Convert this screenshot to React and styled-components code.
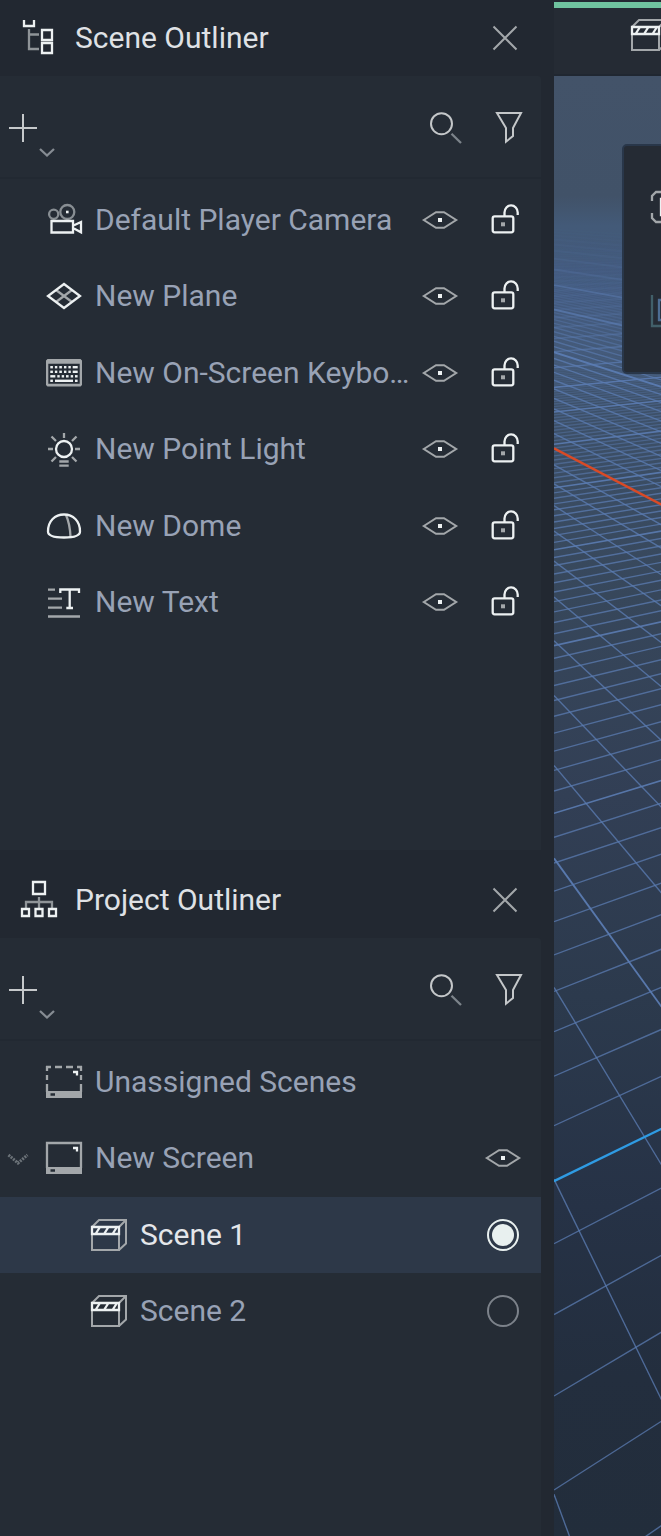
import React, { useState } from 'react';
import styled, { createGlobalStyle } from 'styled-components';

const GlobalStyle = createGlobalStyle`
  *, *::before, *::after { box-sizing: border-box; }
  body {
    margin: 0;
    background: #222831;
    color: #98a2b5;
    font: 400 30px/36px Roboto, "Liberation Sans", sans-serif;
  }
`;

const WHITE = '#edf1f2';
const GRAY = '#a3a7aa';

const Shell = styled.div`
  display: grid;
  grid-template-columns: minmax(0, 554px) minmax(107px, 1fr);
  min-height: 100vh;
`;

const Sidebar = styled.aside`
  display: flex;
  flex-direction: column;
  gap: 12px;
  padding-right: 13px;
  background: #222831;
`;

const Panel = styled.section`
  display: flex;
  flex-direction: column;
  flex: ${(p) => p.$share} 0 0;
`;

const PanelHeader = styled.header`
  display: flex;
  align-items: center;
  height: 76px;
  padding: 0 24px 0 20px;
`;

const PanelTitle = styled.h2`
  flex: 1;
  margin: 0 0 0 19px;
  font: inherit;
  color: #dfe1e5;
`;

const PanelBody = styled.div`
  flex: 1;
  background: #252c35;
  border-radius: 0 3px 0 0;
`;

const Toolbar = styled.div`
  display: flex;
  align-items: flex-start;
  gap: 33px;
  height: 103px;
  padding: 36px 18px 0 9px;
  border-bottom: 2px solid #222932;
`;

const Spacer = styled.span`
  flex: 1;
`;

const IconButton = styled.button`
  display: block;
  flex: none;
  padding: 0;
  border: 0;
  background: none;
  color: inherit;
  cursor: pointer;
`;

const Svg = styled.svg`
  display: block;
  flex: none;
  overflow: visible;
`;

const List = styled.ul`
  margin: 0;
  padding: 3px 0 0;
  list-style: none;
`;

const Row = styled.li`
  display: flex;
  align-items: flex-start;
  height: 76px;
  padding: 20px ${(p) => p.$end}px 0 ${(p) => (p.$nested ? 91 : 8)}px;
  color: ${(p) => (p.$selected ? '#e4e6ea' : 'inherit')};
  background: ${(p) => (p.$selected ? '#2d3848' : 'none')};

  &:nth-child(even) {
    height: 77px;
  }
`;

const ToggleSlot = styled.span`
  flex: none;
  width: 20px;
  height: 36px;
  margin-right: 18px;
`;

const RowLabel = styled.label`
  flex: 1;
  min-width: 0;
  margin-left: 13px;
  overflow: hidden;
  white-space: nowrap;
`;

const RowActions = styled.span`
  display: flex;
  gap: 29px;
`;

const Radio = styled.input`
  appearance: none;
  width: 32px;
  height: 32px;
  margin: 2px;
  padding: 3px;
  border: 2px solid #7c828a;
  border-radius: 50%;
  background-clip: content-box;

  &:checked {
    border-color: #e8f0ef;
    background-color: #e8f0ef;
  }
`;

const Main = styled.main`
  display: flex;
  flex-direction: column;
  min-width: 0;
  padding-top: 2px;
  overflow: hidden;
`;

const TopBar = styled.div`
  height: 74px;
  padding: 9px 0 0 77px;
  border-top: 6px solid #6fc39f;
  border-bottom: 2px solid #202731;
  background: #252b34;
`;

const Viewport = styled.div`
  position: relative;
  display: flex;
  flex: 1;
  overflow: hidden;
  background: linear-gradient(
    #435369 0px,
    #415268 120px,
    #435a78 150px,
    #42587a 220px,
    #40546f 270px,
    #3d5068 340px,
    #37475b 520px,
    #323f55 720px,
    #2c3a4d 920px,
    #263246 1130px,
    #232e3e 1300px,
    #222d3b 1460px
  );
`;

const GridSvg = styled.svg`
  display: block;
  width: 100%;
`;

const FloatingTools = styled.div`
  position: absolute;
  top: 68px;
  left: 68px;
  display: flex;
  flex-direction: column;
  gap: 72px;
  width: 116px;
  height: 230px;
  padding: 45px 0 0 27px;
  border: 2px solid #29374a;
  border-radius: 5px;
  background: #252b34;
`;

function Icon({ width = 36, height = 36, children }) {
  return (
    <Svg width={width} height={height} viewBox={`0 0 ${width} ${height}`} fill="none" stroke={GRAY} strokeWidth="2.3" aria-hidden="true">
      {children}
    </Svg>
  );
}

const SceneTreeIcon = () => (
  <Icon>
    <path d="M9 9V29H19M9 14.5H19" stroke="#8f9498" />
    <path d="M4 0V6H14V0" stroke={WHITE} />
    <path d="M22 10H32V20H22ZM22 23H32V33H22Z" stroke={WHITE} />
  </Icon>
);

const ProjectTreeIcon = () => (
  <Icon>
    <path d="M19 15V26M6 26V20H32V26" stroke="#8f9498" />
    <path d="M13 0H25V12H13ZM2 27H9V34H2ZM15.5 27H22.5V34H15.5ZM29 27H36V34H29Z" stroke={WHITE} />
  </Icon>
);

const CloseIcon = () => (
  <Icon width={24} height={24}>
    <path d="M.5 .5L23.5 23.5M23.5 .5L.5 23.5" strokeWidth="2" />
  </Icon>
);

const AddIcon = () => (
  <Icon width={46} height={44}>
    <path d="M0 16H28M14 2V30" stroke="#c6c9cb" strokeWidth="2" />
    <path d="M31 37L38 43.5L45 37" stroke="#868c93" />
  </Icon>
);

const SearchIcon = () => (
  <Icon width={32} height={32}>
    <circle cx="11.5" cy="11.7" r="10.5" stroke="#c4c7c9" strokeWidth="2" />
    <path d="M21.5 21.7L31 31" stroke="#7d848b" />
  </Icon>
);

const FilterIcon = () => (
  <Icon width={28} height={32}>
    <path d="M2 1H26L18 16V24L11 29.7V16Z" stroke="#c4c7c9" strokeWidth="2" />
  </Icon>
);

const CameraIcon = () => (
  <Icon>
    <circle cx="7.7" cy="12.3" r="4.6" stroke="#888e93" />
    <circle cx="21.3" cy="10" r="7" stroke="#888e93" />
    <rect x="20" y="8.7" width="2.6" height="2.6" fill={WHITE} stroke="none" />
    <path d="M5.5 19H27V30.5H5.5ZM28 23.2L35 20V30.3L28 26.6" stroke={WHITE} />
  </Icon>
);

const PlaneIcon = () => (
  <Icon>
    <path d="M10 12L26 24M26 12L10 24" />
    <path d="M18 6L34 18L18 30L2 18Z" stroke={WHITE} />
  </Icon>
);

const KEY_ROWS = [
  [11, [[4.3, 2.6], [8.9, 2.4], [13.3, 2.6], [18, 2.4], [22.4, 2.4], [26.7, 5]]],
  [15.6, [[4.3, 2.6], [8.9, 2.4], [13.3, 2.6], [18, 2.4], [22.4, 2.4], [26.7, 5]]],
  [20.1, [[4.3, 5], [11.3, 2.4], [15.7, 2.4], [20, 2.6], [24.7, 2.4], [29, 2.6]]],
  [24.6, [[4.3, 2.6], [9, 18], [29, 2.6]]],
];

const KeyboardIcon = () => (
  <Icon>
    <path d="M1.5 4H34.5L36 5.5V30L34.5 31.5H1.5L0 30V5.5ZM2.3 8.7V28.7H33.7V8.7Z" fill={GRAY} fillRule="evenodd" stroke="none" />
    {KEY_ROWS.map(([y, keys]) =>
      keys.map(([x, w]) => <rect key={`${x}-${y}`} x={x} y={y} width={w} height="2.4" fill={WHITE} stroke="none" />)
    )}
  </Icon>
);

const LightIcon = () => (
  <Icon>
    <path d="M18 2V7M2 18H7M29 18H34M5.5 5.5L10 10M30.5 5.5L26 10M10 26L5.5 30.5M26 26L30.5 30.5M13.3 30.5H22.7M13.3 34.7H22.7" />
    <circle cx="18" cy="18" r="8" stroke={WHITE} />
  </Icon>
);

const DomeIcon = () => (
  <Icon>
    <path d="M20 7Q24 16 24.5 29" />
    <path d="M2 23.5C2 13 9 6.5 18 6.5S34 13 34 23.5C34 28 26 29.5 18 29.5S2 28 2 23.5Z" stroke={WHITE} />
  </Icon>
);

const TextIcon = () => (
  <Icon>
    <path d="M2 5.7H9M2 14.7H16M2 23.7H16M2 32.5H34" />
    <path d="M14.3 9V5.5H33V9M23.7 5.5V24M20.3 24H27" stroke={WHITE} />
  </Icon>
);

const EyeIcon = () => (
  <Icon>
    <path d="M1.8 18L14 10.2H22L34.2 18L22 25.8H14Z" strokeWidth="2" />
    <rect x="16" y="16" width="4" height="4" fill={WHITE} stroke="none" />
  </Icon>
);

const UnlockIcon = () => (
  <Icon>
    <rect x="5.7" y="14.3" width="20.6" height="16" rx="2" stroke={WHITE} />
    <path d="M17.5 14V10.5A6.5 7 0 0 1 30.7 10.5V13" stroke={WHITE} />
    <rect x="14" y="20.3" width="4" height="4" fill={GRAY} stroke="none" />
  </Icon>
);

const ScreenIcon = ({ dashed }) => (
  <Icon>
    {dashed ? (
      <path d="M0 3H5M9 3H16M20 3H27M31 3H36M1 2V7M1 11V16M1 20V28M35 2V7M35 11V16M35 20V28" />
    ) : (
      <path d="M1 28V3H35V28" />
    )}
    <path d="M0 27H36V34H0ZM4.5 29.3V31.7H9V29.3Z" fill={GRAY} fillRule="evenodd" stroke="none" />
    <path d="M27 8H31V11.5" stroke={WHITE} />
  </Icon>
);

const ClapperIcon = () => (
  <Icon>
    <path d="M1 18V33H28V18M1 10L8 3H35V26.5L28 33M28 10L35 3" strokeWidth="2" />
    <path d="M1 10H28V17H1ZM4.5 17L9 10M13 17L17.5 10M21.5 17L26 10" stroke={WHITE} />
  </Icon>
);

const ExpandIcon = () => (
  <Icon width={20}>
    <path d="M.5 15L10 23L19.5 15" stroke="#6c7379" strokeWidth="3" strokeDasharray="2 1" />
  </Icon>
);

const FrameIcon = () => (
  <Icon width={32} height={32}>
    <path d="M1 10V5L5 1H10M22 1H27L31 5V10M1 22V27L5 31H10M22 31H27L31 27V22" />
    <path d="M10 8H22V24H10Z" stroke={WHITE} />
  </Icon>
);

const LayersIcon = () => (
  <Icon width={32} height={32}>
    <path d="M1 0V31H32" stroke="#415f69" />
    <path d="M8 5H30V25H8Z" stroke="#4d6d93" />
  </Icon>
);

// Ground grid in perspective: both line families meet on one horizon.
const HORIZON = 121.5;
const REACH = 2000;

// Dims lines as they crowd together, so the far ground blends into haze.
function haze(depth, step, major) {
  const spacing = depth * depth * step * (major ? 10 : 1);
  return Math.min(1, spacing / (major ? 20 : 6)) * Math.min(1, depth / 150);
}

function gridLines() {
  const lines = [];
  for (let n = -300; n <= 6; n += 1) {
    const major = n % 10 === 0;
    const depth = 1 / (0.0010166 - 0.00006073 * n);
    lines.push({
      id: `a${n}`,
      y1: HORIZON + depth,
      y2: HORIZON + depth * (1 - (0.053 * REACH) / 107),
      color: n === 0 ? '#2f9be3' : '#5b7cb2',
      width: n === 0 ? 2.4 : major ? 1.6 : 1.4,
      opacity: n === 0 ? 1 : (major ? 0.9 : 0.75) * haze(depth, 0.00006073, major),
    });
  }
  for (let m = -110; m <= 14; m += 1) {
    const major = m % 10 === 0;
    const depth = 1 / (0.0039872 - 0.00024739 * m);
    lines.push({
      id: `b${m}`,
      y1: HORIZON + depth,
      y2: HORIZON + depth * (1 + (0.2235 * REACH) / 107),
      color: m === 0 ? '#d94a26' : '#5b7cb2',
      width: m === 0 ? 2.4 : major ? 1.9 : 1.4,
      opacity: m === 0 ? 1 : (major ? 0.95 : 0.78) * haze(depth, 0.00024739, major),
    });
  }
  return lines.sort((a, b) => (a.width > 2) - (b.width > 2));
}

const GRID = gridLines();

const Ground = () => (
  <GridSvg aria-hidden="true">
    {GRID.map((l) => (
      <line key={l.id} x1="0" y1={l.y1} x2={REACH} y2={l.y2} stroke={l.color} strokeWidth={l.width} opacity={l.opacity} />
    ))}
  </GridSvg>
);

const OBJECTS = [
  ['Default Player Camera', CameraIcon],
  ['New Plane', PlaneIcon],
  ['New On-Screen Keybo…', KeyboardIcon],
  ['New Point Light', LightIcon],
  ['New Dome', DomeIcon],
  ['New Text', TextIcon],
];

function OutlinerPanel({ title, icon, share, children }) {
  return (
    <Panel $share={share} aria-label={title}>
      <PanelHeader>
        {icon}
        <PanelTitle>{title}</PanelTitle>
        <IconButton aria-label={`Close ${title}`}><CloseIcon /></IconButton>
      </PanelHeader>
      <PanelBody>
        <Toolbar>
          <IconButton aria-label="Add"><AddIcon /></IconButton>
          <Spacer />
          <IconButton aria-label="Search"><SearchIcon /></IconButton>
          <IconButton aria-label="Filter"><FilterIcon /></IconButton>
        </Toolbar>
        <List>{children}</List>
      </PanelBody>
    </Panel>
  );
}

export default function App() {
  const [scene, setScene] = useState('Scene 1');

  return (
    <Shell>
      <GlobalStyle />
      <Sidebar>
        <OutlinerPanel title="Scene Outliner" icon={<SceneTreeIcon />} share={425}>
          {OBJECTS.map(([name, ObjectIcon]) => (
            <Row key={name} $end={18}>
              <ToggleSlot />
              <ObjectIcon />
              <RowLabel as="span">{name}</RowLabel>
              <RowActions>
                <IconButton aria-label={`Show or hide ${name}`}><EyeIcon /></IconButton>
                <IconButton aria-label={`Lock ${name}`}><UnlockIcon /></IconButton>
              </RowActions>
            </Row>
          ))}
        </OutlinerPanel>

        <OutlinerPanel title="Project Outliner" icon={<ProjectTreeIcon />} share={337}>
          <Row $end={20}>
            <ToggleSlot />
            <ScreenIcon dashed />
            <RowLabel as="span">Unassigned Scenes</RowLabel>
          </Row>
          <Row $end={20}>
            <ToggleSlot>
              <IconButton aria-label="Collapse New Screen"><ExpandIcon /></IconButton>
            </ToggleSlot>
            <ScreenIcon />
            <RowLabel as="span">New Screen</RowLabel>
            <IconButton aria-label="Show or hide New Screen"><EyeIcon /></IconButton>
          </Row>
          {['Scene 1', 'Scene 2'].map((name, i) => (
            <Row key={name} $end={20} $nested $selected={scene === name}>
              <ClapperIcon />
              <RowLabel htmlFor={`scene-${i}`}>{name}</RowLabel>
              <Radio
                type="radio"
                name="scene"
                id={`scene-${i}`}
                checked={scene === name}
                onChange={() => setScene(name)}
              />
            </Row>
          ))}
        </OutlinerPanel>
      </Sidebar>

      <Main>
        <TopBar>
          <IconButton aria-label="Scenes"><ClapperIcon /></IconButton>
        </TopBar>
        <Viewport>
          <Ground />
          <FloatingTools>
            <IconButton aria-label="Frame selection"><FrameIcon /></IconButton>
            <IconButton aria-label="Layers"><LayersIcon /></IconButton>
          </FloatingTools>
        </Viewport>
      </Main>
    </Shell>
  );
}
